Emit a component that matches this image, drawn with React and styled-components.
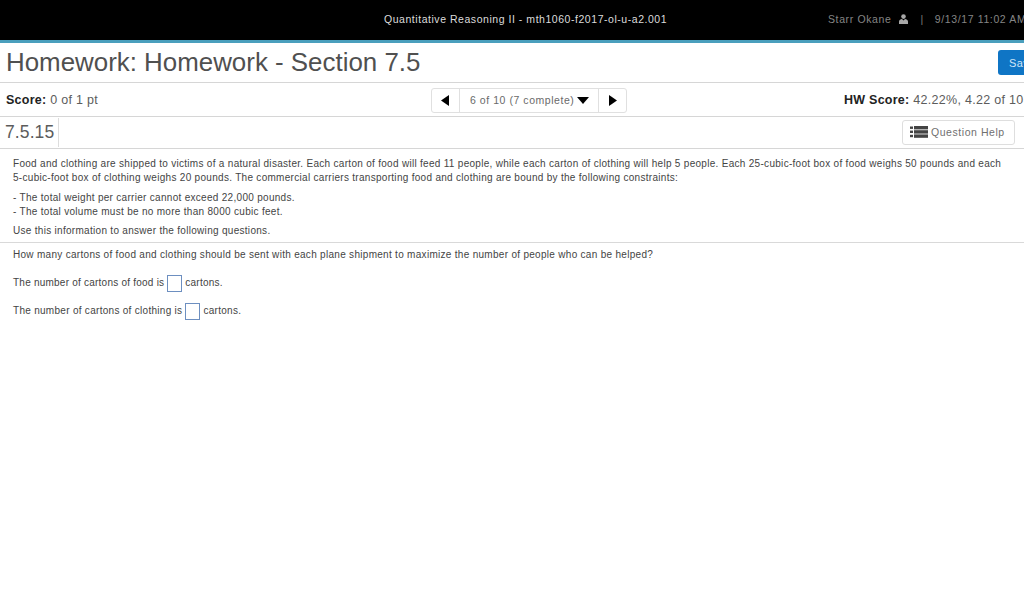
import React from "react";
import styled, { createGlobalStyle } from "styled-components";

const Global = createGlobalStyle`
  html, body { margin: 0; padding: 0; background: #fff; overflow: hidden; }
  body { font-family: "Liberation Sans", Arial, sans-serif; color: #444; }
`;
const Page = styled.div`width: 1024px; height: 609px; overflow: hidden; background: #fff;`;
const TopBar = styled.header`
  height: 40px; box-sizing: content-box; background: #000; border-bottom: 3px solid #4a9fbd;
  display: flex; align-items: center; position: relative; color: #ddd; font-size: 10.5px;
`;
const Course = styled.div`width: 1024px; padding-left: 384px; box-sizing: border-box; margin-top: -2px; color: #dcdcdc; flex: none; letter-spacing: .54px;`;
const UserInfo = styled.div`
  position: absolute; left: 828px; top: 13px; display: flex; align-items: center; white-space: nowrap; color: #858585; letter-spacing: .62px;
`;
const Sep = styled.span`margin: 0 11px 0 12px; color: #777;`;
const TitleRow = styled.div`
  height: 39px; border-bottom: 1px solid #d6d6d6; display: flex; align-items: center; justify-content: space-between; padding-left: 6px; overflow: hidden;
`;
const Title = styled.h1`margin: -1px 0 0; font-size: 25.9px; font-weight: 400; color: #505050; white-space: nowrap;`;
const SaveButton = styled.button`
  width: 40px; height: 25px; margin: 0 -14px 0 0; padding: 0 0 0 11px; border: 0; border-radius: 3px 0 0 3px; background: #0f75c5; color: #cfe5f7;
  font: 11px "Liberation Sans", sans-serif; letter-spacing: .4px; text-align: left; flex: none; overflow: hidden;
`;
const ScoreRow = styled.div`
  height: 33px; border-bottom: 1px solid #d6d6d6; display: grid; grid-template-columns: 425px 196px 1fr; align-items: center; padding-left: 6px; font-size: 12.5px; color: #5c5c5c; white-space: nowrap; letter-spacing: .3px;
`;
const Label = styled.b`color: #222; letter-spacing: .25px;`;
const Nav = styled.div`
  margin-top: 1px; display: flex; height: 25px; width: 196px; box-sizing: border-box; border: 1px solid #e0e0e0; border-radius: 3px;
`;
const NavArrow = styled.div`
  width: 27px; flex: none; display: flex; align-items: center; justify-content: center;
  ${p => p.$left ? "border-right: 1px solid #e0e0e0;" : "border-left: 1px solid #e0e0e0;"}
`;
const NavLabel = styled.div`
  flex: 1; display: flex; align-items: center; justify-content: flex-start; padding-left: 10px; gap: 3px; font-size: 10.5px; letter-spacing: .55px; color: #6a6a6a;
`;
const HwScore = styled.div`padding-left: 217px;`;
const QuestionRow = styled.div`
  height: 31px; border-bottom: 1px solid #d6d6d6; display: flex; align-items: center; justify-content: space-between;
`;
const QuestionNum = styled.div`
  height: 29px; width: 53px; padding-left: 5px; border-right: 1px solid #ddd; font-size: 17.5px; line-height: 29px; color: #5c5c5c; letter-spacing: .1px;
`;
const HelpButton = styled.button`
  width: 113px; height: 25px; margin-right: 9px; border: 1px solid #dedede; border-radius: 3px; background: #fff; color: #707070; padding: 0 0 2px 7px;
  font: 10.5px "Liberation Sans", sans-serif; letter-spacing: .55px; display: flex; align-items: center; gap: 3px;
`;
const Content = styled.main`font-size: 10px; letter-spacing: .295px; color: #444;`;
const Inner = styled.div`padding: ${p => p.$top}px 13px 0; line-height: 14px;`;
const Para = styled.p`margin: 0 0 ${p => p.$gap}px; white-space: nowrap;`;
const Rule = styled.hr`margin: 4px 0 0; border: 0; border-top: 1px solid #d9d9d9;`;
const Answer = styled.div`display: flex; align-items: center; height: 18px; margin-top: ${p => p.$top}px; white-space: nowrap; letter-spacing: ${p => p.$spacing}px;`;
const Box = styled.span`width: 13px; height: 15px; margin: 0 3px; border: 1px solid #6d8fc0; background: #fff; flex: none;`;

const Tri = ({ d }) => (
  <svg width="9" height="11" viewBox="0 0 9 11"><path d={d} fill="#000" /></svg>
);
const User = () => (
  <svg width="9" height="10" viewBox="0 0 9 10" style={{ marginLeft: 8 }}>
    <circle cx="4.5" cy="2.6" r="2.3" fill="#a8a8a8" />
    <path d="M0 10 V7.6 C0 6 1.6 5.2 3 5 L4.5 6.5 L6 5 C7.4 5.2 9 6 9 7.6 V10Z" fill="#a8a8a8" />
  </svg>
);
const ListIcon = () => (
  <svg width="18" height="12" viewBox="0 0 18 12">
    <g fill="#444">
      <rect x="0" y="0.5" width="3" height="2.4" /><rect x="0" y="4.6" width="3" height="2.4" /><rect x="0" y="8.8" width="3" height="2.4" />
      <rect x="4" y="0" width="14" height="3.4" /><rect x="4" y="4.2" width="14" height="3.4" /><rect x="4" y="8.4" width="14" height="3.4" />
    </g>
  </svg>
);

export default function App() {
  return (
    <Page>
      <Global />
      <TopBar>
        <Course>Quantitative Reasoning II - mth1060-f2017-ol-u-a2.001</Course>
        <UserInfo>Starr Okane<User /><Sep>|</Sep>9/13/17 11:02 AM</UserInfo>
      </TopBar>
      <TitleRow>
        <Title>Homework: Homework - Section 7.5</Title>
        <SaveButton>Save</SaveButton>
      </TitleRow>
      <ScoreRow>
        <div><Label>Score:</Label> 0 of 1 pt</div>
        <Nav>
          <NavArrow $left><Tri d="M8 0 V11 L0 5.5Z" /></NavArrow>
          <NavLabel>6 of 10 (7 complete)<svg width="12" height="7" viewBox="0 0 12 7"><path d="M0 0H12L6 7Z" fill="#000" /></svg></NavLabel>
          <NavArrow><Tri d="M1 0 V11 L9 5.5Z" /></NavArrow>
        </Nav>
        <HwScore><Label>HW Score:</Label> 42.22%, 4.22 of 10 pts</HwScore>
      </ScoreRow>
      <QuestionRow>
        <QuestionNum>7.5.15</QuestionNum>
        <HelpButton><ListIcon />Question Help</HelpButton>
      </QuestionRow>
      <Content>
        <Inner $top={8}>
          <Para $gap={6}>Food and clothing are shipped to victims of a natural disaster. Each carton of food will feed 11 people, while each carton of clothing will help 5 people. Each 25-cubic-foot box of food weighs 50 pounds and each<br />5-cubic-foot box of clothing weighs 20 pounds. The commercial carriers transporting food and clothing are bound by the following constraints:</Para>
          <Para $gap={5}>- The total weight per carrier cannot exceed 22,000 pounds.<br />- The total volume must be no more than 8000 cubic feet.</Para>
          <Para $gap={0}>Use this information to answer the following questions.</Para>
        </Inner>
        <Rule />
        <Inner $top={5}>
          <Para $gap={0}>How many cartons of food and clothing should be sent with each plane shipment to maximize the number of people who can be helped?</Para>
          <Answer $top={12} $spacing={0.23}>The number of cartons of food is<Box />cartons.</Answer>
          <Answer $top={10} $spacing={0.29}>The number of cartons of clothing is<Box />cartons.</Answer>
        </Inner>
      </Content>
    </Page>
  );
}
